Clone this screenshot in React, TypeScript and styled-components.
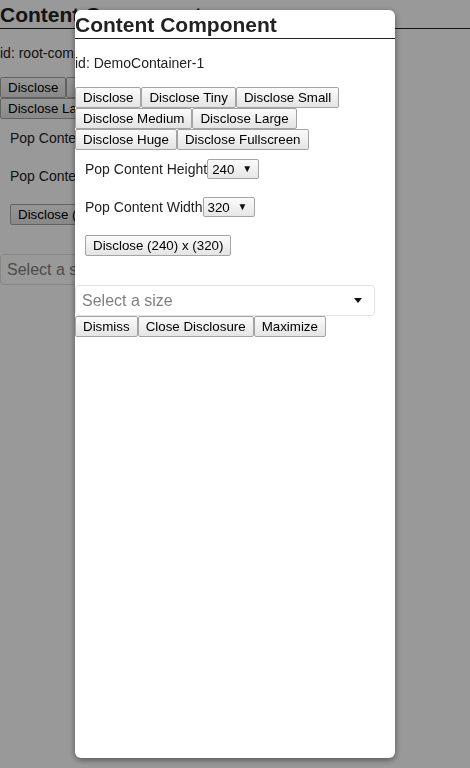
import React from "react";
import styled, { createGlobalStyle } from "styled-components";

const GlobalStyle = createGlobalStyle`
  html, body {
    margin: 0;
    padding: 0;
    background: #ffffff;
  }
  body {
    font-family: "Liberation Sans", Arial, sans-serif;
    color: #222222;
  }
  * { box-sizing: border-box; }
`;

const Page = styled.div`
  width: 470px;
  min-height: 768px;
  background: #ffffff;
`;

const Container = styled.div`
  display: flex;
  flex-direction: column;
  align-items: flex-start;
  width: 100%;
`;

const Title = styled.h2`
  align-self: stretch;
  margin: 0;
  padding: 3px 0 1px;
  font-size: 21px;
  line-height: 24px;
  font-weight: bold;
  color: #222222;
  white-space: nowrap;
  border-bottom: 1px solid #222222;
`;

const IdText = styled.p`
  margin: 16px 0;
  font-size: 14px;
  line-height: 16px;
  white-space: nowrap;
`;

const ButtonRow = styled.div`
  display: flex;
  flex-wrap: wrap;
  align-self: stretch;
`;

const Btn = styled.button`
  display: inline-block;
  height: 21px;
  margin: 0;
  padding: 2px 7px;
  font-family: "Liberation Sans", Arial, sans-serif;
  font-size: 13.333px;
  line-height: 15px;
  color: #000000;
  white-space: nowrap;
  background: linear-gradient(#fbfbfb, #e4e4e4);
  border: 1px solid #a4a4a4;
  border-radius: 2px;
  cursor: pointer;
`;

const Controls = styled.div`
  display: flex;
  flex-direction: column;
  align-items: flex-start;
  gap: 18px;
  padding: 9px 0 0 10px;
  margin-bottom: 29px;
`;

const FieldRow = styled.div`
  display: flex;
  align-items: center;
  height: 20px;
  font-size: 14px;
  white-space: nowrap;
`;

const NativeLikeSelect = styled.div`
  display: inline-flex;
  align-items: center;
  justify-content: space-between;
  width: 52px;
  height: 20px;
  padding: 0 6px 0 4px;
  font-size: 13.333px;
  color: #000000;
  background: linear-gradient(#fbfbfb, #e6e6e6);
  border: 1px solid #a4a4a4;
  border-radius: 2px;
`;

const SmallArrow = styled.span`
  font-size: 10px;
  line-height: 10px;
  color: #111111;
`;

const SizePicker = styled.div`
  display: flex;
  align-items: center;
  justify-content: space-between;
  width: 300px;
  height: 31px;
  padding: 0 12px 0 6px;
  background: #ffffff;
  border: 1px solid #e2e2e2;
  border-radius: 4px;
`;

const Placeholder = styled.span`
  font-size: 16px;
  color: #808080;
  white-space: nowrap;
`;

const Caret = styled.span`
  width: 0;
  height: 0;
  border-left: 4px solid transparent;
  border-right: 4px solid transparent;
  border-top: 5px solid #111111;
`;

const Overlay = styled.div`
  position: fixed;
  inset: 0;
  display: flex;
  justify-content: center;
  padding: 10px 0;
  background: rgba(0, 0, 0, 0.4);
`;

const Dialog = styled.div`
  width: 320px;
  height: 100%;
  background: #ffffff;
  border-radius: 6px;
  box-shadow: 0 2px 6px rgba(0, 0, 0, 0.45);
  overflow: hidden;
`;

const sizes = [
  "Disclose",
  "Disclose Tiny",
  "Disclose Small",
  "Disclose Medium",
  "Disclose Large",
  "Disclose Huge",
  "Disclose Fullscreen",
];

type ContentProps = {
  id: string;
  inDialog?: boolean;
};

function ContentComponent({ id, inDialog }: ContentProps) {
  const height = 240;
  const width = 320;
  return (
    <Container>
      <Title>Content Component</Title>
      <IdText>id: {id}</IdText>
      <ButtonRow>
        {sizes.map((s) => (
          <Btn key={s}>{s}</Btn>
        ))}
      </ButtonRow>
      <Controls>
        <FieldRow>
          Pop Content Height
          <NativeLikeSelect>
            <span>{height}</span>
            <SmallArrow>▼</SmallArrow>
          </NativeLikeSelect>
        </FieldRow>
        <FieldRow>
          Pop Content Width
          <NativeLikeSelect>
            <span>{width}</span>
            <SmallArrow>▼</SmallArrow>
          </NativeLikeSelect>
        </FieldRow>
        <Btn>
          Disclose ({height}) x ({width})
        </Btn>
      </Controls>
      <SizePicker>
        <Placeholder>Select a size</Placeholder>
        <Caret />
      </SizePicker>
      {inDialog && (
        <ButtonRow>
          <Btn>Dismiss</Btn>
          <Btn>Close Disclosure</Btn>
          <Btn>Maximize</Btn>
        </ButtonRow>
      )}
    </Container>
  );
}

export default function App() {
  return (
    <Page>
      <GlobalStyle />
      <ContentComponent id="root-component" />
      <Overlay>
        <Dialog>
          <ContentComponent id="DemoContainer-1" inDialog />
        </Dialog>
      </Overlay>
    </Page>
  );
}
